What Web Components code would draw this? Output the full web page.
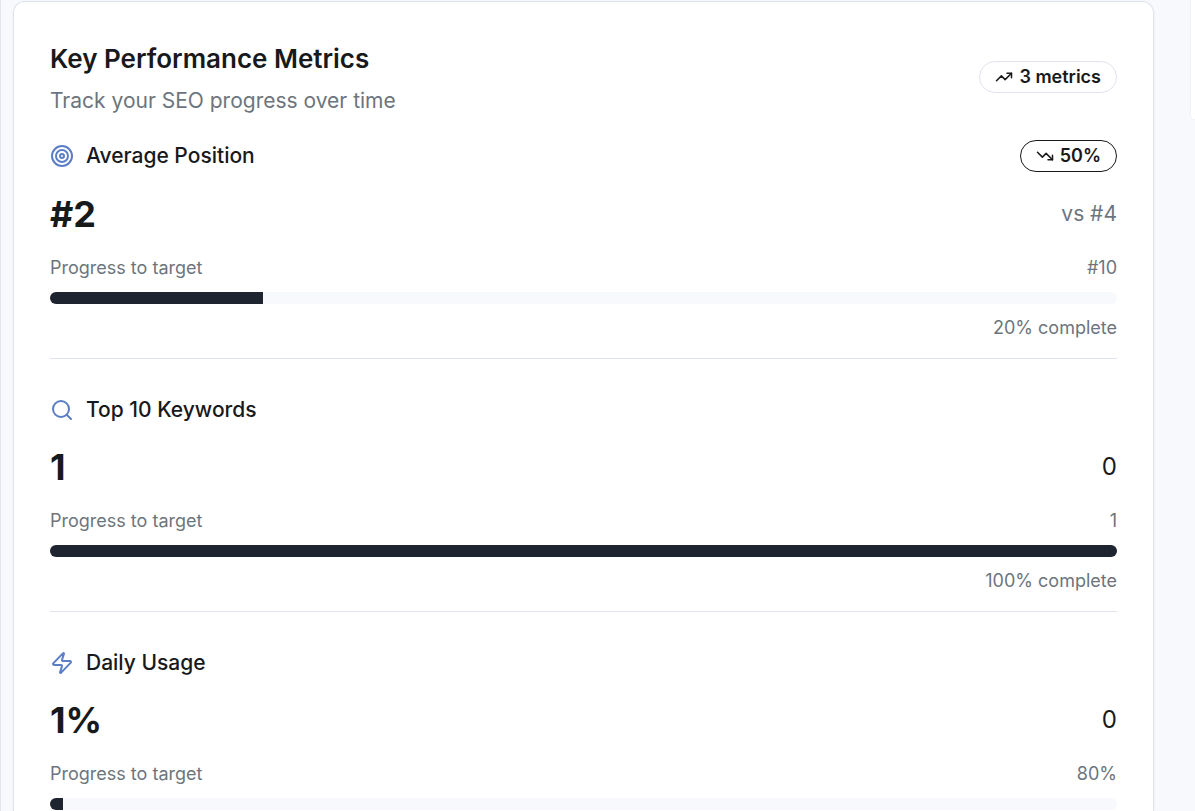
<!DOCTYPE html>
<html lang="en">
<head>
<meta charset="utf-8">
<meta name="viewport" content="width=device-width, initial-scale=1">
<title>Key Performance Metrics</title>
<style>
  :root {
    --bg: #f8f9fd;
    --line: #dfe4ec;
    --ink: #18191b;
    --muted: #6c757d;
    --accent: #5b7ec4;
    --fill: #1e2430;
  }
  body {
    margin: 0;
    background: var(--bg);
    color: var(--ink);
    font-family: Inter, "Liberation Sans", sans-serif;
  }
</style>
</head>
<body>
<dashboard-page>
  <metrics-card>
    <span slot="title">Key Performance Metrics</span>
    <span slot="subtitle">Track your SEO progress over time</span>
    <pill-badge slot="badge" icon="up">3 metrics</pill-badge>
    <metric-item icon="target" label="Average Position" value="#2" target="#10" progress="20" complete="20% complete">
      <pill-badge slot="change" icon="down" strong>50%</pill-badge>
      <span slot="previous">vs #4</span>
    </metric-item>
    <metric-item icon="search" label="Top 10 Keywords" value="1" previous="0" target="1" progress="100" complete="100% complete"></metric-item>
    <metric-item icon="zap" label="Daily Usage" value="1%" previous="0" target="80%" progress="1.25"></metric-item>
  </metrics-card>
  <side-panel slot="side"></side-panel>
</dashboard-page>

<script>
const ICONS = {
  target: '<circle cx="12" cy="12" r="10"/><circle cx="12" cy="12" r="6"/><circle cx="12" cy="12" r="2"/>',
  search: '<circle cx="11" cy="11" r="8"/><path d="m21 21-4.3-4.3"/>',
  zap: '<path d="M4 14a1 1 0 0 1-.78-1.63l9.9-10.2a.5.5 0 0 1 .86.46l-1.92 6.02A1 1 0 0 0 13 10h7a1 1 0 0 1 .78 1.63l-9.9 10.2a.5.5 0 0 1-.86-.46l1.92-6.02A1 1 0 0 0 11 14z"/>',
  up: '<path d="M22 7 13.5 15.5 8.5 10.5 2 17"/><path d="M16 7h6v6"/>',
  down: '<path d="M22 17 13.5 8.5 8.5 13.5 2 7"/><path d="M16 17h6v-6"/>'
};

class LineIcon extends HTMLElement {
  connectedCallback() {
    this.attachShadow({ mode: 'open' }).innerHTML = `
      <style>
        :host { display: block; flex: none; width: 24px; height: 24px; }
        svg { display: block; width: 100%; height: 100%; fill: none; stroke: currentColor;
              stroke-width: 2; stroke-linecap: round; stroke-linejoin: round; }
      </style>
      <svg viewBox="0 0 24 24" aria-hidden="true">${ICONS[this.getAttribute('name')]}</svg>`;
  }
}

class PillBadge extends HTMLElement {
  connectedCallback() {
    this.attachShadow({ mode: 'open' }).innerHTML = `
      <style>
        :host { display: flex; align-items: center; gap: 6px; box-sizing: border-box; height: 32px;
                padding: 0 15px; border: 1px solid var(--line); border-radius: 16px;
                font-size: 18px; line-height: 24px; font-weight: 600; white-space: nowrap; }
        :host([strong]) { border-color: var(--ink); }
        line-icon { width: 18px; height: 18px; }
      </style>
      <line-icon name="${this.getAttribute('icon')}"></line-icon><slot></slot>`;
  }
}

class MetricItem extends HTMLElement {
  connectedCallback() {
    const a = name => this.getAttribute(name) || '';
    this.attachShadow({ mode: 'open' }).innerHTML = `
      <style>
        :host { display: block; border-bottom: 1px solid var(--line); padding-bottom: 18px; }
        :host(:last-of-type) { border-bottom: 0; padding-bottom: 0; }
        .row { display: flex; align-items: center; justify-content: space-between; }
        .name { display: flex; align-items: center; gap: 12px; }
        .name line-icon { color: var(--accent); }
        h3 { margin: 0; font-size: 21px; line-height: 30px; font-weight: 500; }
        .figures { margin: 18px 0; }
        .value { font-size: 36px; line-height: 48px; font-weight: 700; }
        .previous { font-size: 24px; line-height: 36px; }
        ::slotted([slot=previous]) { display: block; font-size: 21px; line-height: 30px; color: var(--muted); }
        .small { font-size: 18px; line-height: 24px; color: var(--muted); }
        progress { display: block; appearance: none; width: 100%; height: 12px; margin-top: 12px;
                   border: 0; border-radius: 6px; overflow: hidden; background: var(--bg); }
        progress::-webkit-progress-bar { background: var(--bg); }
        progress::-webkit-progress-value { background: var(--fill); }
        .complete { margin-top: 12px; text-align: right; }
      </style>
      <div class="row">
        <div class="name"><line-icon name="${a('icon')}"></line-icon><h3>${a('label')}</h3></div>
        <slot name="change"></slot>
      </div>
      <div class="row figures">
        <span class="value">${a('value')}</span>
        <div class="previous"><slot name="previous">${a('previous')}</slot></div>
      </div>
      <div class="row small"><label for="bar">Progress to target</label><span>${a('target')}</span></div>
      <progress id="bar" max="100" value="${a('progress')}"></progress>
      ${a('complete') ? `<div class="small complete">${a('complete')}</div>` : ''}`;
  }
}

class MetricsCard extends HTMLElement {
  connectedCallback() {
    this.attachShadow({ mode: 'open' }).innerHTML = `
      <style>
        :host { display: block; box-sizing: border-box; padding: 36px 36px 0; background: #fff;
                border: 1px solid var(--line); border-bottom: 0; border-radius: 12px 12px 0 0;
                box-shadow: 0 1px 3px rgb(30 37 51 / 6%); }
        header { display: flex; align-items: center; justify-content: space-between; margin-bottom: 24px; }
        h2 { margin: 0 0 6px; font-size: 26px; line-height: 42px; font-weight: 600; }
        p { margin: 0; font-size: 21px; line-height: 30px; color: var(--muted); }
        .items { display: flex; flex-direction: column; gap: 36px; }
      </style>
      <header>
        <div><h2><slot name="title"></slot></h2><p><slot name="subtitle"></slot></p></div>
        <slot name="badge"></slot>
      </header>
      <div class="items"><slot></slot></div>`;
  }
}

class SidePanel extends HTMLElement {
  connectedCallback() {
    this.attachShadow({ mode: 'open' }).innerHTML = `
      <style>
        :host { display: block; box-sizing: border-box; height: 120px; background: #fff;
                border: 1px solid #f0f2f7; border-width: 0 0 1px 1px; border-radius: 0 0 0 12px; }
      </style>`;
  }
}

class DashboardPage extends HTMLElement {
  connectedCallback() {
    this.attachShadow({ mode: 'open' }).innerHTML = `
      <style>
        :host { display: block; height: 100vh; overflow: hidden; box-sizing: border-box;
                border-left: 1px solid #e4e6ee; }
        main { display: grid; grid-template-columns: minmax(0, 1fr) 5px; column-gap: 36px;
               min-height: 100%; padding-left: 12px; }
        .content { display: grid; padding-top: 1px; }
      </style>
      <main><div class="content"><slot></slot></div><slot name="side"></slot></main>`;
  }
}

customElements.define('line-icon', LineIcon);
customElements.define('pill-badge', PillBadge);
customElements.define('metric-item', MetricItem);
customElements.define('metrics-card', MetricsCard);
customElements.define('side-panel', SidePanel);
customElements.define('dashboard-page', DashboardPage);
</script>
</body>
</html>
